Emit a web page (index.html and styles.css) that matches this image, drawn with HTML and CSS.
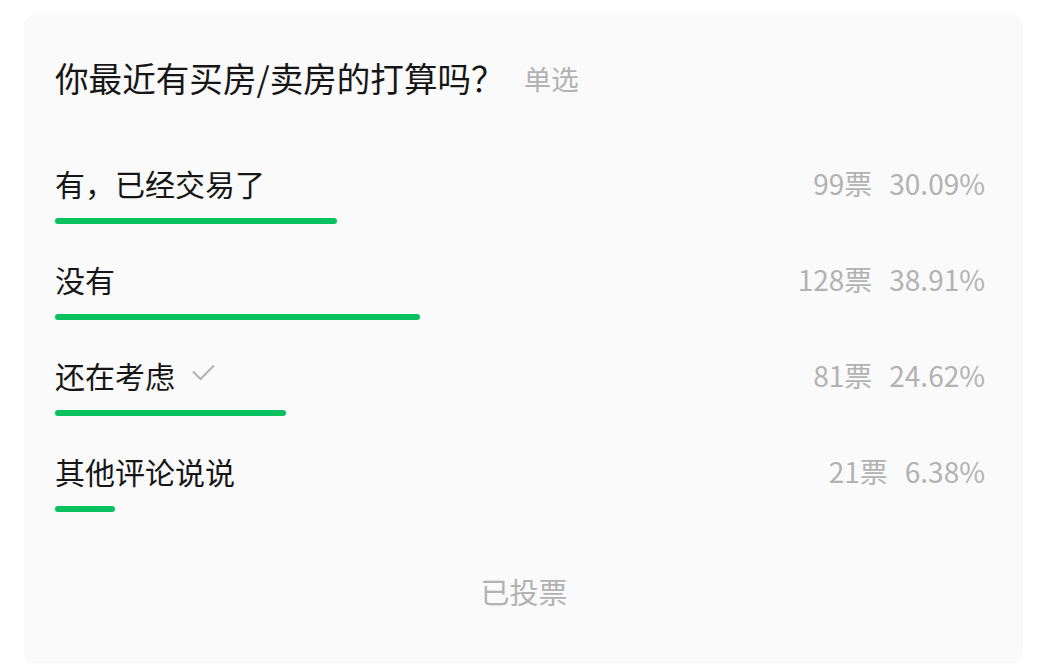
FILE: index.html
```html
<!DOCTYPE html>
<html lang="zh-CN">
<head>
<meta charset="utf-8">
<title>投票</title>
<link rel="stylesheet" href="styles.css">
</head>
<body>
<div class="card">
  <div class="title">
    <span class="title-text">你最近有买房/卖房的打算吗？</span>
    <span class="type">单选</span>
  </div>
  <div class="options">
    <div class="option">
      <div class="option-head">
        <span class="label">有，已经交易了</span>
        <span class="stats"><span class="votes">99票</span><span class="pct">30.09%</span></span>
      </div>
      <div class="track"><div class="bar" style="width:30.09%"></div></div>
    </div>
    <div class="option">
      <div class="option-head">
        <span class="label">没有</span>
        <span class="stats"><span class="votes">128票</span><span class="pct">38.91%</span></span>
      </div>
      <div class="track"><div class="bar" style="width:38.91%"></div></div>
    </div>
    <div class="option">
      <div class="option-head">
        <span class="label">还在考虑<svg class="check" width="24" height="18" viewBox="0 0 24 18"><path d="M2 8.5 L9.5 16 L23 2.5" fill="none" stroke="#b2b2b2" stroke-width="2"/></svg></span>
        <span class="stats"><span class="votes">81票</span><span class="pct">24.62%</span></span>
      </div>
      <div class="track"><div class="bar" style="width:24.62%"></div></div>
    </div>
    <div class="option">
      <div class="option-head">
        <span class="label">其他评论说说</span>
        <span class="stats"><span class="votes">21票</span><span class="pct">6.38%</span></span>
      </div>
      <div class="track"><div class="bar" style="width:6.38%"></div></div>
    </div>
  </div>
  <div class="footer">已投票</div>
</div>
</body>
</html>
```
FILE: styles.css
```css
html, body {
  margin: 0;
  padding: 0;
  background: #ffffff;
}
body {
  padding: 15px 41px 3px 24px;
  font-family: "Noto Sans CJK SC", "Noto Sans", sans-serif;
}
.card {
  background: #fafafa;
  border-radius: 10px;
  padding: 41px 30px 51px 31px;
  height: 648px;
  box-sizing: border-box;
}
.title {
  display: flex;
  align-items: center;
  height: 44px;
}
.title-text {
  font-size: 33.6px;
  line-height: 44px;
  color: #161616;
}
.type {
  font-size: 27.5px;
  color: #b2b2b2;
  margin-left: 19px;
}
.options {
  margin-top: 65px;
  display: flex;
  flex-direction: column;
  gap: 37px;
}
.option-head {
  display: flex;
  justify-content: space-between;
  align-items: center;
  height: 40px;
  margin-top: -2px;
}
.label {
  font-size: 30px;
  color: #161616;
  display: flex;
  align-items: center;
}
.check {
  margin-left: 16px;
  margin-top: -6px;
}
.stats {
  font-size: 28px;
  color: #b2b2b2;
  margin-right: 8px;
  display: flex;
  gap: 17px;
}
.track {
  margin-top: 15px;
  height: 6px;
}
.bar {
  height: 6px;
  background: #07c160;
  border-radius: 3px;
}
.footer {
  margin-top: 59px;
  text-align: center;
  font-size: 29px;
  line-height: 40px;
  color: #b2b2b2;
}
```
